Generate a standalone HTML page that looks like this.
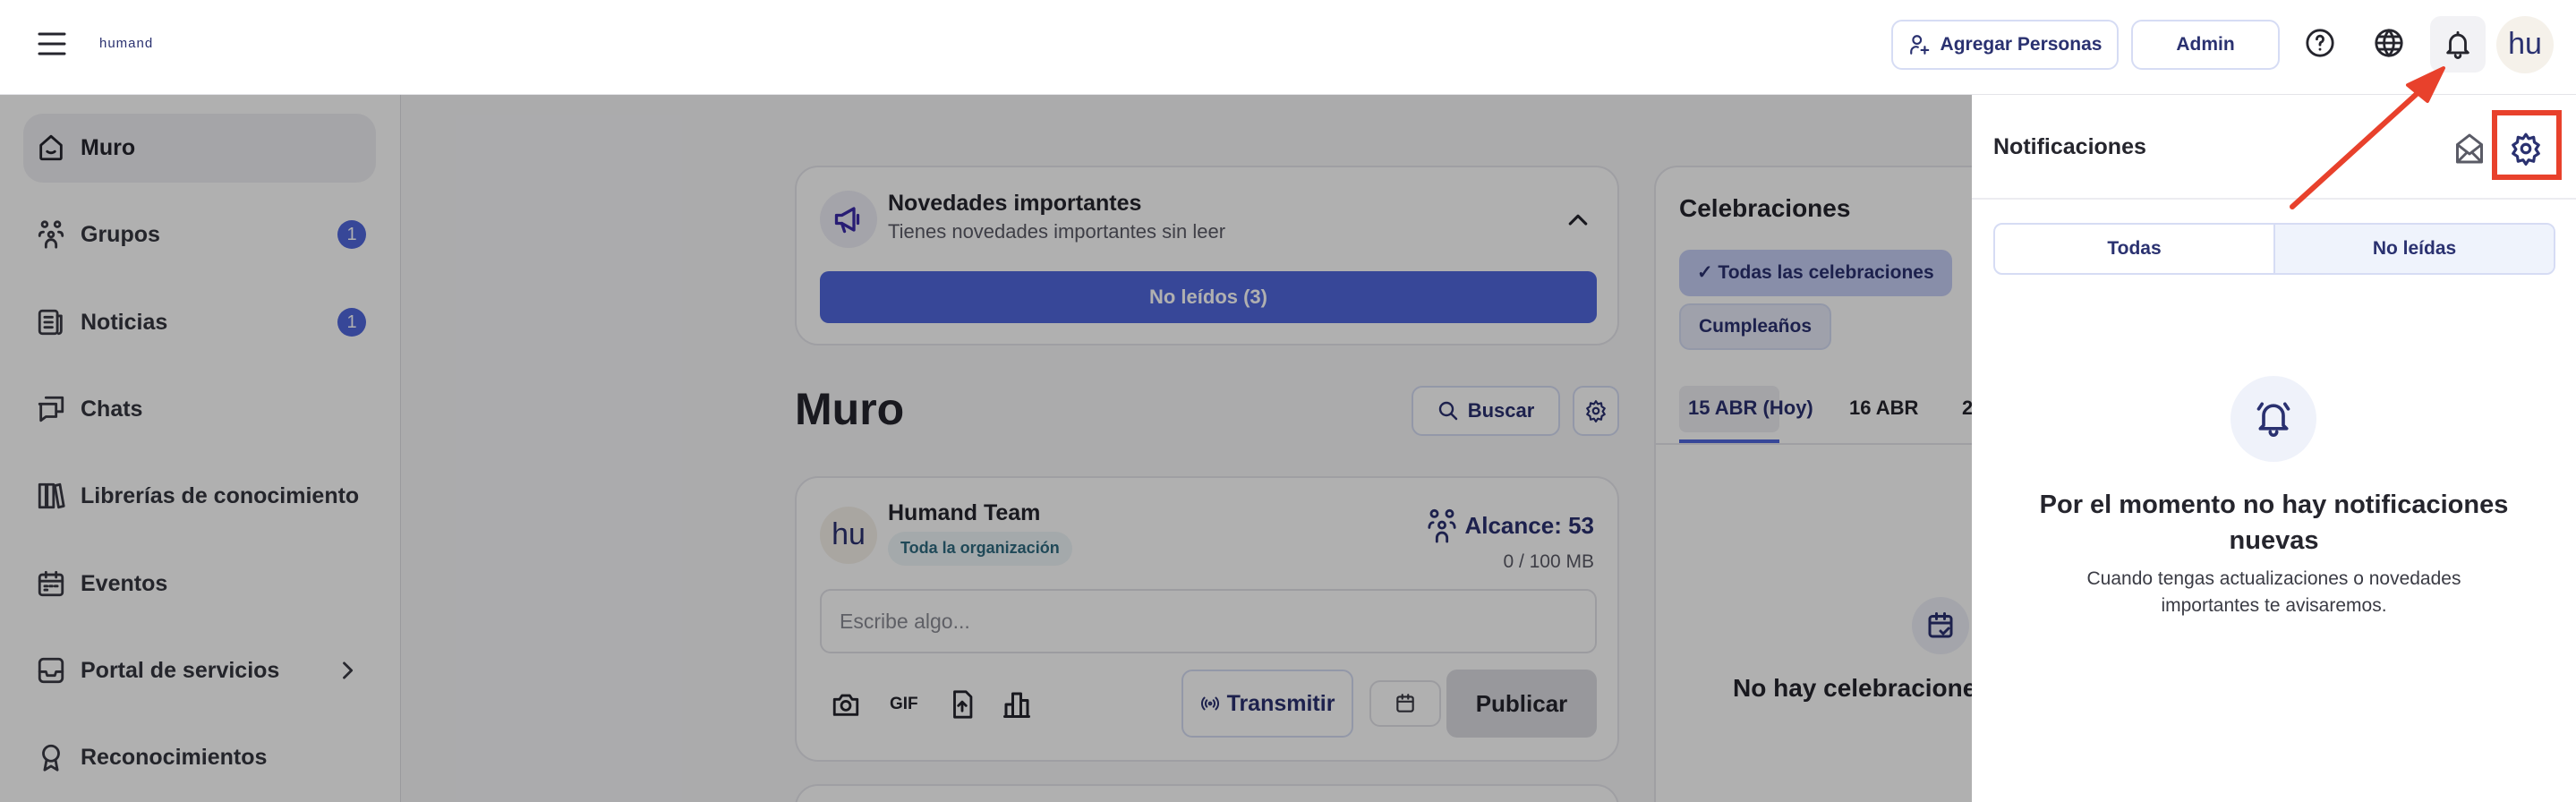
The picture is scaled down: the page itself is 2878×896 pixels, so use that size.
<!DOCTYPE html>
<html style="width:2878px;height:896px;overflow:hidden"><head><meta charset="utf-8"><style>
*{box-sizing:border-box;margin:0;padding:0}
body{width:2878px;height:896px;overflow:hidden;position:relative;background:#f8f8fa;font-family:"Liberation Sans",sans-serif;color:#25252d}
#w{position:absolute;left:0;top:0;width:2878px;height:896px;overflow:hidden}
.a{position:absolute}
.hdr{left:0;top:0;width:2878px;height:106px;background:#fff;border-bottom:1px solid #e4e4e8}
.side{left:0;top:106px;width:448px;height:790px;background:#fff;border-right:1px solid #e0e0e4}
.nav{position:absolute;left:40px;font-size:25px;font-weight:bold;color:#35363f;display:flex;align-items:center;gap:16px;height:40px}
.nav svg{width:34px;height:34px}
.badge{position:absolute;left:377px;width:32px;height:32px;border-radius:50%;background:#5067dd;color:#fff;font-size:20px;text-align:center;line-height:32px}
.card{position:absolute;background:#fff;border:2px solid #e6e6ec;border-radius:26px}
.btn{position:absolute;border:2px solid #d6dcf4;border-radius:12px;background:#fff;color:#2a3170;font-weight:bold;display:flex;align-items:center;justify-content:center;gap:10px}
.ov{left:0;top:106px;width:2203px;height:790px;background:rgba(0,0,0,.31)}
.panel{left:2203px;top:106px;width:675px;height:790px;background:#fff}
svg{fill:none;stroke-linecap:round;stroke-linejoin:round}
</style></head><body><div id="w">
<div class="a hdr">
 <svg class="a" style="left:42px;top:33px" width="32" height="32" viewBox="0 0 32 32" stroke="#25252d" stroke-width="3"><path d="M2 5h28M2 16h28M2 27h28"/></svg>
 <div class="a" style="left:111px;top:40px;font-size:15px;color:#2a3170;letter-spacing:1px">humand</div>
 <div class="btn" style="left:2113px;top:22px;width:254px;height:56px;font-size:21px"><svg width="26" height="26" viewBox="0 0 24 24" stroke="#2a3170" stroke-width="2"><circle cx="9" cy="7" r="4"/><path d="M3 21v-2a5 5 0 0 1 7-4.5M17 14v7M13.5 17.5h7"/></svg>Agregar Personas</div>
 <div class="btn" style="left:2381px;top:22px;width:166px;height:56px;font-size:21px">Admin</div>
 <svg class="a" style="left:2575px;top:31px" width="34" height="34" viewBox="0 0 24 24" stroke="#25252d" stroke-width="2"><circle cx="12" cy="12" r="10"/><path d="M9.5 9a2.5 2.5 0 1 1 3.5 2.3c-.7.4-1 1-1 1.7v.5M12 17h.01"/></svg>
 <svg class="a" style="left:2652px;top:31px" width="34" height="34" viewBox="0 0 24 24" stroke="#25252d" stroke-width="2"><circle cx="12" cy="12" r="10"/><path d="M2 12h20M12 2a15 15 0 0 1 0 20M12 2a15 15 0 0 0 0 20M4 7h16M4 17h16"/></svg>
 <div class="a" style="left:2715px;top:18px;width:62px;height:63px;border-radius:12px;background:#f2f2f5"></div>
 <svg class="a" style="left:2729px;top:31px" width="34" height="36" viewBox="0 0 24 24" stroke="#25252d" stroke-width="2"><path d="M6 17V11a6 6 0 0 1 12 0v6l2 2H4zM10 21a2 2 0 0 0 4 0M12 3v2"/></svg>
 <div class="a" style="left:2789px;top:18px;width:64px;height:64px;border-radius:50%;background:#f5f1ea;color:#2a3170;font-size:34px;text-align:center;line-height:62px">hu</div>
</div>
<div class="a side">
 <div class="a" style="left:26px;top:21px;width:394px;height:77px;border-radius:22px;background:#f0f0f4"></div>
 <div class="nav" style="top:39px"><svg viewBox="0 0 24 24" stroke="#25252d" stroke-width="2"><path d="M4 10l8-7 8 7v10a1 1 0 0 1-1 1H5a1 1 0 0 1-1-1z M9 15c2 1.5 4 1.5 6 0"/></svg><span style="color:#25252d">Muro</span></div>
 <div class="nav" style="top:136px"><svg viewBox="0 0 24 24" stroke="#3a3b44" stroke-width="2"><circle cx="7" cy="4" r="2"/><circle cx="17" cy="4" r="2"/><circle cx="12" cy="12" r="2"/><path d="M3 13c0-2 1-3 3-3M21 13c0-2-1-3-3-3M8 22v-2a4 4 0 0 1 8 0v2"/></svg>Grupos</div><div class="badge" style="top:140px">1</div>
 <div class="nav" style="top:234px"><svg viewBox="0 0 24 24" stroke="#3a3b44" stroke-width="2"><rect x="3" y="3" width="14" height="18" rx="2"/><path d="M17 7h3v12a2 2 0 0 1-2 2M7 8h6M7 12h6M7 16h6"/></svg>Noticias</div><div class="badge" style="top:238px">1</div>
 <div class="nav" style="top:331px"><svg viewBox="0 0 24 24" stroke="#3a3b44" stroke-width="2"><path d="M8 3h13v11h-4M3 8h13v10H8l-4 3V8z"/></svg>Chats</div>
 <div class="nav" style="top:428px"><svg viewBox="0 0 24 24" stroke="#3a3b44" stroke-width="2"><rect x="3" y="3" width="5" height="18"/><rect x="9" y="3" width="5" height="18"/><path d="M15 4l4-1 3 17-4 1z"/></svg>Librerías de conocimiento</div>
 <div class="nav" style="top:526px"><svg viewBox="0 0 24 24" stroke="#3a3b44" stroke-width="2"><rect x="3" y="5" width="18" height="16" rx="2"/><path d="M3 10h18M8 3v4M16 3v4M7 14h2M11 14h2M15 14h2M7 17h2"/></svg>Eventos</div>
 <div class="nav" style="top:623px"><svg viewBox="0 0 24 24" stroke="#3a3b44" stroke-width="2"><rect x="3" y="3" width="18" height="18" rx="3"/><path d="M3 13h5l1 3h6l1-3h5"/></svg>Portal de servicios</div>
 <svg class="a" style="left:374px;top:628px" width="28" height="30" viewBox="0 0 24 24" stroke="#3a3b44" stroke-width="2.4"><path d="M9 5l7 7-7 7"/></svg>
 <div class="nav" style="top:720px"><svg viewBox="0 0 24 24" stroke="#3a3b44" stroke-width="2"><circle cx="12" cy="9" r="6"/><path d="M8.5 14L7 22l5-3 5 3-1.5-8"/></svg>Reconocimientos</div>
</div>
<div class="card" style="left:888px;top:185px;width:921px;height:201px">
 <div class="a" style="left:26px;top:26px;width:64px;height:64px;border-radius:50%;background:#eeeef6"></div>
 <svg class="a" style="left:40px;top:40px" width="36" height="36" viewBox="0 0 24 24" stroke="#3a2aa8" stroke-width="2.2"><path d="M3 9h4l9-5v16l-9-5H3zM7 15l2 6M19 9v6"/></svg>
 <div class="a" style="left:102px;top:26px;font-size:25px;font-weight:bold">Novedades importantes</div>
 <div class="a" style="left:102px;top:59px;font-size:22px;color:#5a5b66">Tienes novedades importantes sin leer</div>
 <svg class="a" style="left:858px;top:46px" width="30" height="24" viewBox="0 0 24 18" stroke="#25252d" stroke-width="2.5"><path d="M5 13l7-7 7 7"/></svg>
 <div class="a" style="left:26px;top:116px;width:868px;height:58px;border-radius:10px;background:#5068dc;color:#fff;font-size:22px;font-weight:bold;text-align:center;line-height:58px">No leídos (3)</div>
</div>
<div class="a" style="left:888px;top:428px;font-size:50px;font-weight:bold">Muro</div>
<div class="btn" style="left:1577px;top:431px;width:166px;height:56px;font-size:22px"><svg width="24" height="24" viewBox="0 0 24 24" stroke="#2a3170" stroke-width="2.4"><circle cx="10" cy="10" r="7"/><path d="M15 15l6 6"/></svg>Buscar</div>
<div class="btn" style="left:1757px;top:431px;width:52px;height:56px"><svg width="26" height="26" viewBox="0 0 24 24" stroke="#2a3170" stroke-width="2"><circle cx="12" cy="12" r="3"/><path d="M12 2l2 3 3.5-1 .5 3.5 3 2-2 3 2 3-3 2-.5 3.5-3.5-1-2 3-2-3-3.5 1-.5-3.5-3-2 2-3-2-3 3-2L6.5 4 10 5z"/></svg></div>
<div class="card" style="left:888px;top:532px;width:921px;height:319px">
 <div class="a" style="left:26px;top:32px;width:64px;height:64px;border-radius:50%;background:#f5f1ea;color:#2a3170;font-size:34px;text-align:center;line-height:62px">hu</div>
 <div class="a" style="left:102px;top:25px;font-size:25px;font-weight:bold">Humand Team</div>
 <div class="a" style="left:102px;top:60px;height:38px;padding:0 14px;border-radius:19px;background:#eef5f8;color:#2f6b80;font-size:18px;font-weight:bold;line-height:36px">Toda la organización</div>
 <svg class="a" style="left:704px;top:34px" width="34" height="40" viewBox="0 0 24 28" stroke="#2a3170" stroke-width="2"><circle cx="6" cy="4" r="2.5"/><circle cx="18" cy="4" r="2.5"/><circle cx="12" cy="13" r="2.5"/><path d="M2 15c0-2 1-4 3-4M22 15c0-2-1-4-3-4M8 26v-3a4 4 0 0 1 8 0v3"/></svg>
 <div class="a" style="right:26px;top:38px;font-size:26px;font-weight:bold;color:#2a3170">Alcance: 53</div>
 <div class="a" style="right:26px;top:82px;font-size:21px;color:#5a5b66">0 / 100 MB</div>
 <div class="a" style="left:26px;top:124px;width:868px;height:72px;border:2px solid #e2e2e8;border-radius:12px;font-size:23px;color:#8a8b94;padding:21px 20px">Escribe algo...</div>
 <svg class="a" style="left:38px;top:236px" width="34" height="34" viewBox="0 0 24 24" stroke="#25252d" stroke-width="2"><path d="M3 8h4l2-3h6l2 3h4v12H3z"/><circle cx="12" cy="13" r="3.5"/></svg>
 <div class="a" style="left:104px;top:242px;font-size:19px;font-weight:bold">GIF</div>
 <svg class="a" style="left:168px;top:234px" width="34" height="38" viewBox="0 0 24 24" stroke="#25252d" stroke-width="2"><path d="M6 2h9l4 4v16H6zM12 17v-7M9 13l3-3 3 3"/></svg>
 <svg class="a" style="left:228px;top:234px" width="36" height="38" viewBox="0 0 24 24" stroke="#25252d" stroke-width="2"><path d="M4 21V12h5v9M9 21V4h6v17M15 21V9h5v12M3 21h18"/></svg>
 <div class="btn" style="left:430px;top:214px;width:192px;height:76px;font-size:25px;gap:8px"><svg width="22" height="22" viewBox="0 0 24 24" stroke="#2a3170" stroke-width="2.2"><circle cx="12" cy="12" r="1.5"/><path d="M8 8a6 6 0 0 0 0 8M16 8a6 6 0 0 1 0 8M5 5a10 10 0 0 0 0 14M19 5a10 10 0 0 1 0 14"/></svg>Transmitir</div>
 <div class="btn" style="left:640px;top:226px;width:80px;height:52px;border-color:#e2e2e8"><svg width="26" height="28" viewBox="0 0 24 24" stroke="#3a3b44" stroke-width="2"><rect x="4" y="5" width="16" height="15" rx="2"/><path d="M4 10h16M9 3v4M15 3v4"/></svg></div>
 <div class="a" style="left:726px;top:214px;width:168px;height:76px;border-radius:12px;background:#dcdde3;color:#25252d;font-size:26px;font-weight:bold;text-align:center;line-height:76px">Publicar</div>
</div>
<div class="card" style="left:888px;top:876px;width:921px;height:60px"></div>
<div class="card" style="left:1848px;top:185px;width:500px;height:760px">
 <div class="a" style="left:26px;top:30px;font-size:28px;font-weight:bold">Celebraciones</div>
 <div class="a" style="left:26px;top:92px;height:52px;padding:0 20px;border-radius:12px;background:#c5cef5;color:#2a3170;font-size:21px;font-weight:bold;line-height:52px">✓ Todas las celebraciones</div>
 <div class="a" style="left:26px;top:152px;height:52px;padding:0 20px;border-radius:12px;background:#e6e9f8;border:2px solid #d6dcf4;color:#2a3170;font-size:21px;font-weight:bold;line-height:48px">Cumpleaños</div>
 <div class="a" style="left:26px;top:244px;width:112px;height:52px;border-radius:8px;background:#eeeef2"></div>
 <div class="a" style="left:36px;top:256px;font-size:22px;font-weight:bold;color:#2a3170">15 ABR (Hoy)</div>
 <div class="a" style="left:26px;top:304px;width:112px;height:4px;background:#5068dc"></div>
 <div class="a" style="left:0;top:308px;width:500px;height:2px;background:#e6e6ec"></div>
 <div class="a" style="left:216px;top:256px;font-size:22px;font-weight:bold">16 ABR</div>
 <div class="a" style="left:342px;top:256px;font-size:22px;font-weight:bold">2</div>
 <div class="a" style="left:286px;top:480px;width:64px;height:64px;border-radius:50%;background:#eef0f8"></div>
 <svg class="a" style="left:300px;top:494px" width="36" height="36" viewBox="0 0 24 24" stroke="#2a3170" stroke-width="2"><rect x="4" y="5" width="16" height="15" rx="2"/><path d="M4 10h16M9 3v4M15 3v4M12 16l2 2 4-4"/></svg>
 <div class="a" style="left:86px;top:566px;font-size:28px;font-weight:bold;white-space:nowrap">No hay celebraciones</div>
</div>
<div class="a ov"></div>
<div class="a panel">
 <div class="a" style="left:24px;top:44px;font-size:25px;font-weight:bold">Notificaciones</div>
 <svg class="a" style="left:538px;top:40px" width="36" height="40" viewBox="0 0 24 26" stroke="#5a5b66" stroke-width="2"><path d="M3 10l9-7 9 7v13H3zM3 10l9 7 9-7M3 23l7-7M21 23l-7-7"/></svg>
 <svg class="a" style="left:600px;top:40px" width="38" height="40" viewBox="0 0 24 24" stroke="#2a3170" stroke-width="2"><circle cx="12" cy="12" r="3"/><path d="M12 2l2 3 3.5-1 .5 3.5 3 2-2 3 2 3-3 2-.5 3.5-3.5-1-2 3-2-3-3.5 1-.5-3.5-3-2 2-3-2-3 3-2L6.5 4 10 5z"/></svg>
 <div class="a" style="left:581px;top:17px;width:78px;height:78px;border:6px solid #e8412c"></div>
 <div class="a" style="left:0;top:115px;width:675px;height:2px;background:#ececf0"></div>
 <div class="a" style="left:24px;top:143px;width:628px;height:58px;border:2px solid #d6dcf4;border-radius:10px;overflow:hidden;display:flex">
  <div style="flex:1;text-align:center;line-height:54px;font-size:21px;font-weight:bold;color:#2a3170;border-right:2px solid #d6dcf4">Todas</div>
  <div style="flex:1;text-align:center;line-height:54px;font-size:21px;font-weight:bold;color:#2a3170;background:#eff3fc">No leídas</div>
 </div>
 <div class="a" style="left:289px;top:314px;width:96px;height:96px;border-radius:50%;background:#eff2fa"></div>
 <svg class="a" style="left:315px;top:337px" width="44" height="46" viewBox="0 0 24 24" stroke="#2a3170" stroke-width="2"><path d="M6 17V11a6 6 0 0 1 12 0v6l2 2H4zM10 21a2 2 0 0 0 4 0M3 7l2-3M21 7l-2-3"/></svg>
 <div class="a" style="left:0;top:438px;width:675px;text-align:center;font-size:29px;font-weight:bold;line-height:40px">Por el momento no hay notificaciones<br>nuevas</div>
 <div class="a" style="left:0;top:526px;width:675px;text-align:center;font-size:21px;color:#3a3b44;line-height:30px">Cuando tengas actualizaciones o novedades<br>importantes te avisaremos.</div>
</div>
<svg class="a" style="left:0;top:0" width="2878" height="896"><path d="M2561 231L2712 94" stroke="#e8412c" stroke-width="6"/><path d="M2730 76L2690 95L2712 113Z" fill="#e8412c" stroke="#e8412c" stroke-width="4"/></svg>
</div></body></html>
